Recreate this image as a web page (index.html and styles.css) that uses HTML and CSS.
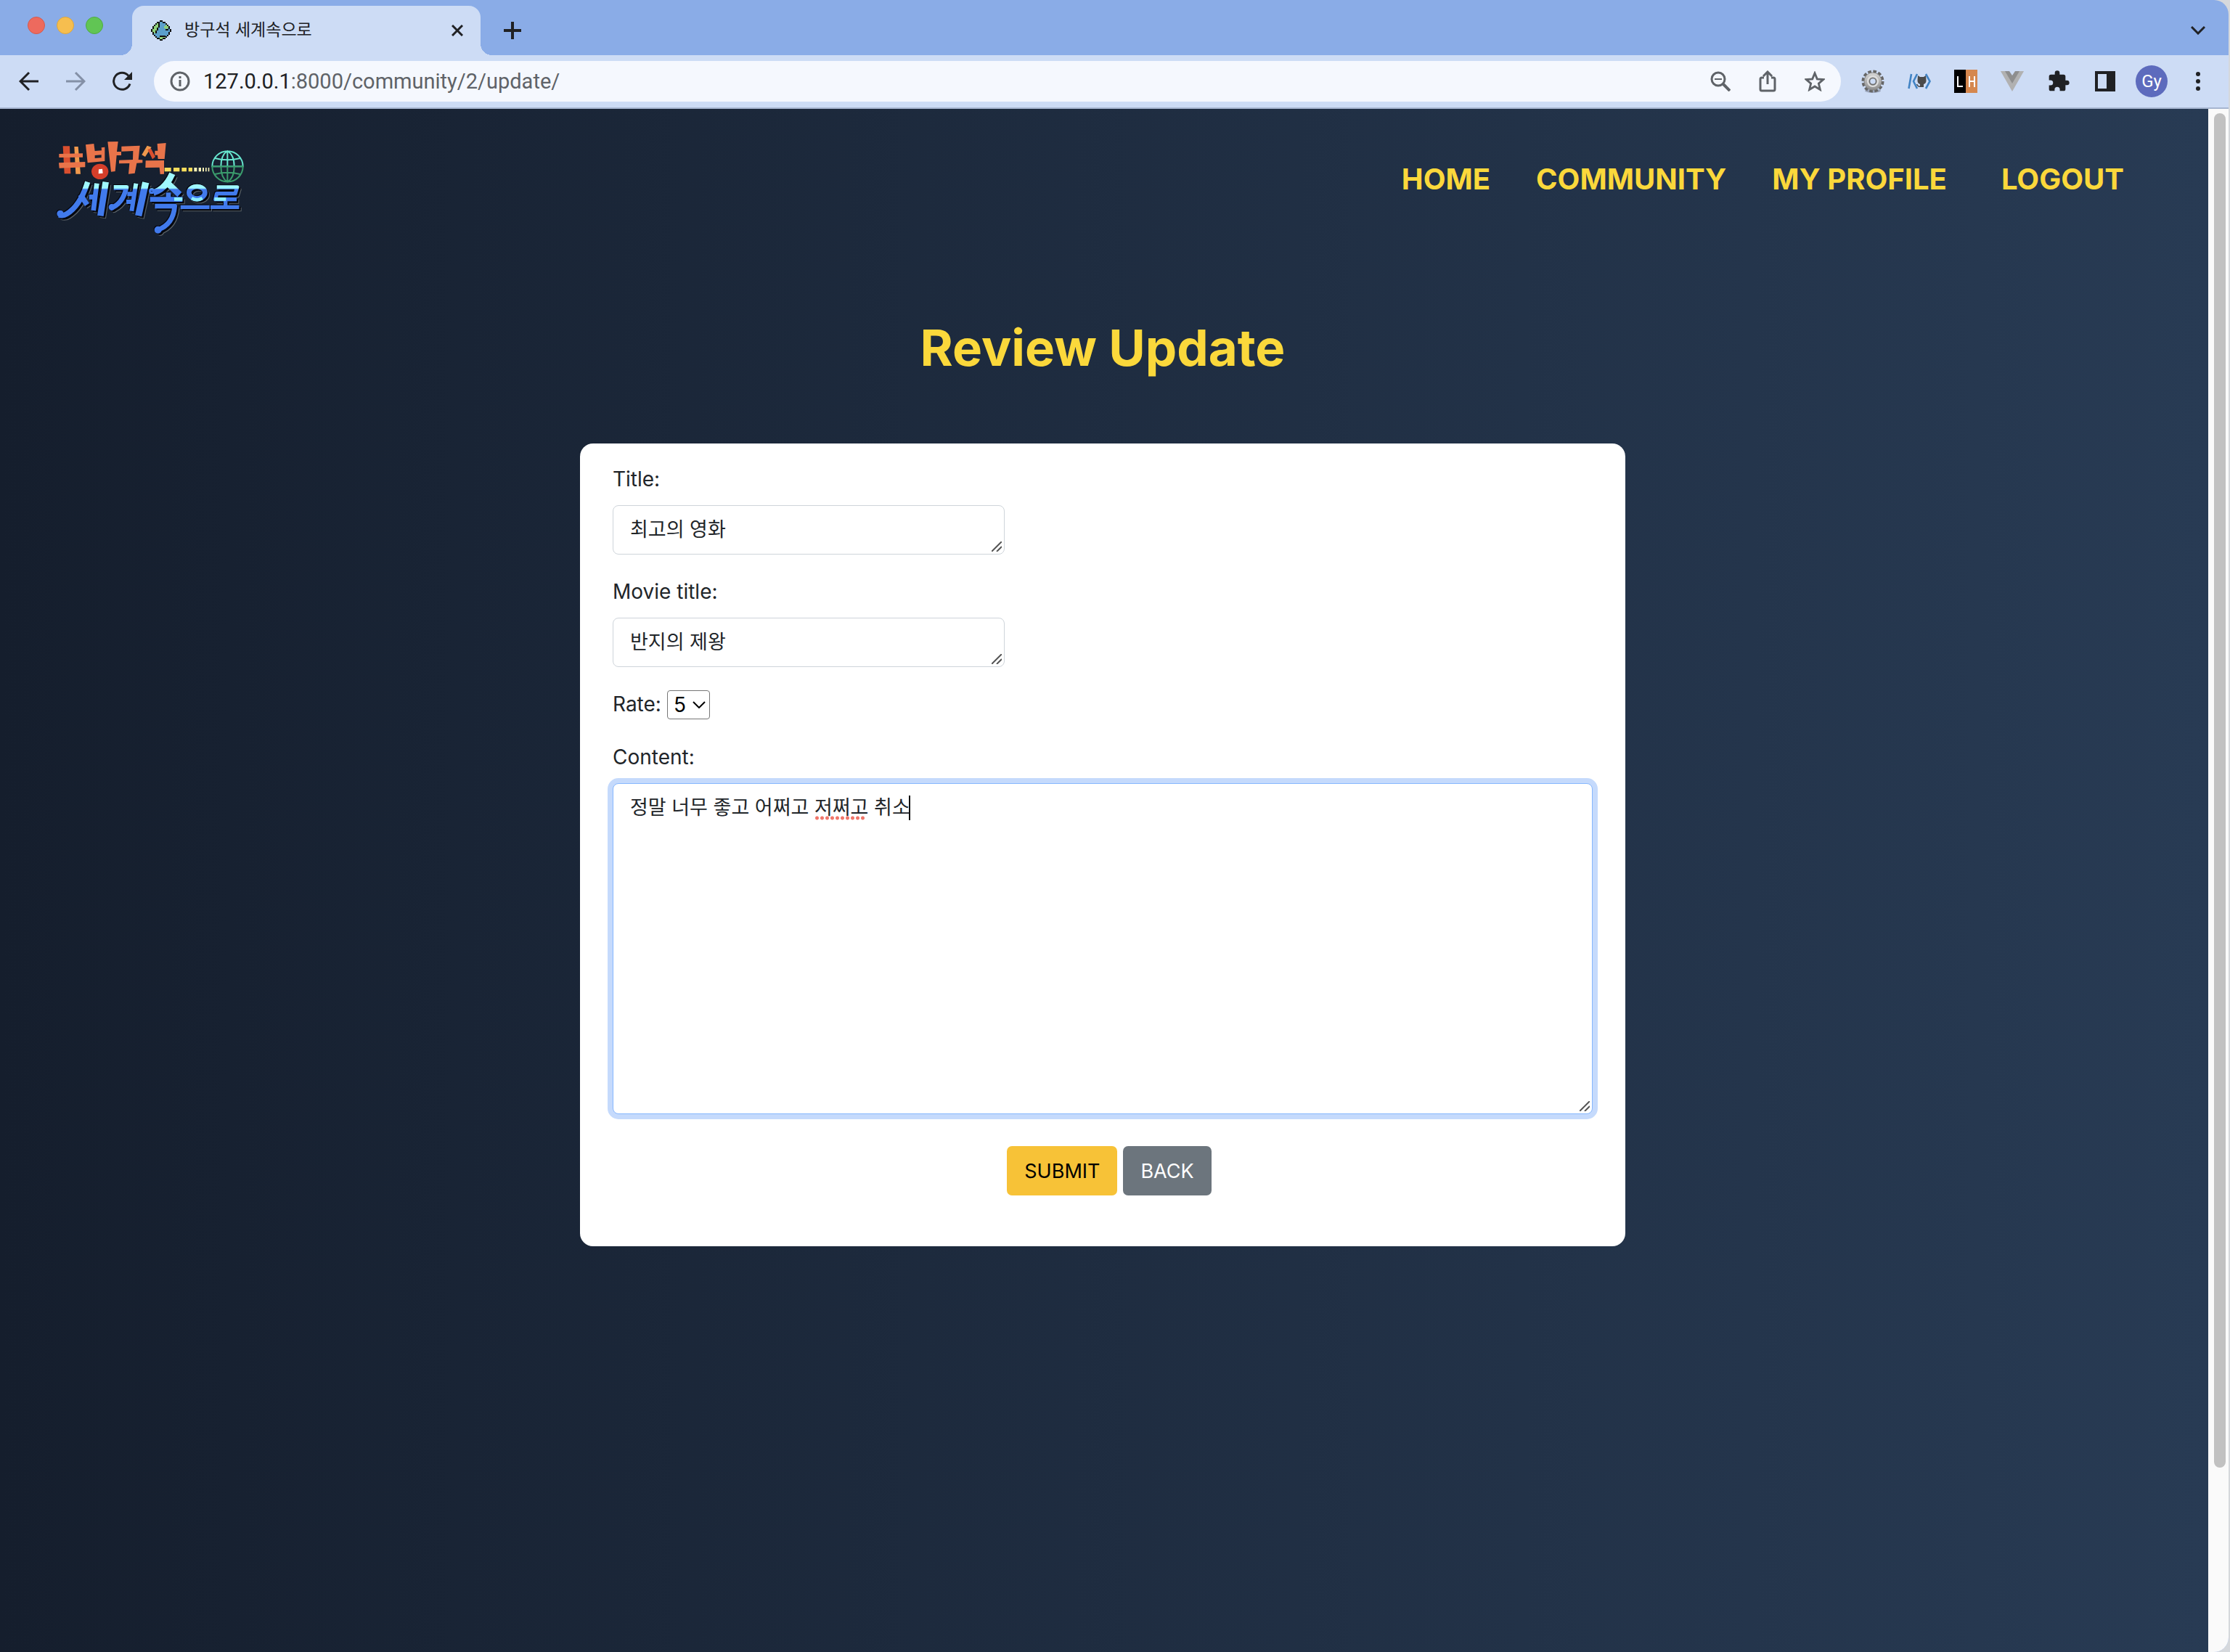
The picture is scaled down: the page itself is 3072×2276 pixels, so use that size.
FILE: index.html
```html
<!DOCTYPE html>
<html lang="ko">
<head>
<meta charset="utf-8">
<title>방구석 세계속으로</title>
<link rel="stylesheet" href="styles.css">
</head>
<body>
<div class="browser">
  <header class="tabstrip">
    <div class="lights"><span class="light red"></span><span class="light amber"></span><span class="light green"></span></div>
    <div class="tab">
      <svg class="favicon" viewBox="0 0 28 28" aria-hidden="true" shape-rendering="crispEdges"><path fill="#111" d="M12 0h4v2h4v2h2v2h2v2h2v4h2v4h-2v4h-2v2h-2v2h-2v2h-4v2h-4v-2h-4v-2h-2v-2h-2v-2h-2v-4h-2v-4h2v-4h2v-2h2v-2h2v-2h4z"/><path fill="#5b9fcb" d="M12 2h4v2h4v2h2v2h2v4h2v4h-2v4h-2v2h-2v2h-4v2h-4v-2H8v-2H6v-2H4v-4H2v-4h2V8h2V6h2V4h4z"/><path fill="#8fd07a" d="M8 4h2v6H8v4H6v4H4v-2H2v-4h2V8h2V6h2zM18 8h2V6h2v2h2v3h-2v2h-2v-2h-2zM12 23h8v1h-4v2h-4z"/><path fill="#111" d="M10 4h2v6h-2zM8 10h2v4H8zM6 14h2v4H6zM20 12h4v2h-4zM12 21h8v2h-8z"/></svg>
      <span class="tab-title">방구석 세계속으로</span>
      <button class="icon-button tab-close" aria-label="Close tab"><svg width="16" height="16" viewBox="0 0 16 16"><path d="M1 1l14 14M15 1L1 15" stroke="#202124" stroke-width="3" fill="none"/></svg></button>
    </div>
    <button class="icon-button new-tab" aria-label="New tab"><svg width="24" height="24" viewBox="0 0 24 24"><path d="M12 0v24M0 12h24" stroke="#202124" stroke-width="4"/></svg></button>
    <button class="icon-button tab-search" aria-label="Search tabs"><svg width="20" height="12" viewBox="0 0 20 12"><path d="M1 1l9 9 9-9" stroke="#202124" stroke-width="3" fill="none"/></svg></button>
  </header>
  <div class="toolbar">
    <div class="history">
      <button class="icon-button" aria-label="Back"><svg width="28" height="28" viewBox="0 0 28 28"><path d="M27 14H3M14 2L2 14l12 12" stroke="#202124" stroke-width="3" fill="none"/></svg></button>
      <button class="icon-button" aria-label="Forward"><svg width="28" height="28" viewBox="0 0 28 28"><path d="M1 14h24M14 2l12 12-12 12" stroke="#8490a6" stroke-width="3" fill="none"/></svg></button>
      <button class="icon-button" aria-label="Reload"><svg width="28" height="28" viewBox="0 0 28 28"><path d="M25 17.500A11.500 11.500 0 1 1 23 6.500" stroke="#202124" stroke-width="3" fill="none"/><path d="M28 1v11H17z" fill="#202124"/></svg></button>
    </div>
    <div class="omnibox">
      <svg width="28" height="28" viewBox="0 0 28 28" aria-hidden="true"><circle cx="14" cy="14" r="12" stroke="#5f6368" stroke-width="3" fill="none"/><path d="M14 12v9M14 7v3" stroke="#5f6368" stroke-width="3"/></svg>
      <p class="url">127.0.0.1<span class="url-path">:8000/community/2/update/</span></p>
      <div class="omni-actions">
        <button class="icon-button" aria-label="Zoom"><svg width="28" height="28" viewBox="0 0 28 28"><circle cx="11" cy="11" r="9" stroke="#5f6368" stroke-width="3" fill="none"/><path d="M18 18l9 9" stroke="#5f6368" stroke-width="4"/><path d="M6 11h10" stroke="#5f6368" stroke-width="2"/></svg></button>
        <button class="icon-button" aria-label="Share"><svg width="28" height="30" viewBox="0 0 28 30"><path d="M9 10H6q-2 0-2 2v14q0 2 2 2h16q2 0 2-2V12q0-2-2-2h-3M14 19V3M8 8l6-6 6 6" stroke="#5f6368" stroke-width="3" fill="none"/></svg></button>
        <button class="icon-button" aria-label="Bookmark"><svg width="28" height="28" viewBox="0 0 30 30"><path d="M15 3l3.500 8.600 9.200.7-7 6 2.200 9L15 22.500l-7.900 4.800 2.200-9-7-6 9.200-.7z" stroke="#5f6368" stroke-width="3" fill="none"/></svg></button>
      </div>
    </div>
    <div class="extensions">
      <svg width="32" height="32" viewBox="0 0 32 32" aria-hidden="true"><defs><linearGradient id="metal" x1="0" y1="0" x2="0" y2="1"><stop offset="0" stop-color="#d6d6d6"/><stop offset="1" stop-color="#8f8f8f"/></linearGradient></defs><ellipse cx="16" cy="29" rx="11" ry="3" fill="#9aa5ba"/><circle cx="16" cy="16" r="13" fill="none" stroke="#666" stroke-width="5" stroke-dasharray="4.400 2.400"/><circle cx="16" cy="16" r="12" fill="url(#metal)" stroke="#858585"/><circle cx="16" cy="16" r="7" fill="none" stroke="#dedede" stroke-width="2"/><circle cx="16" cy="16" r="4.500" fill="#cddcf5" stroke="#6b6b6b" stroke-width="1.500"/></svg>
      <svg width="32" height="32" viewBox="0 0 32 32" aria-hidden="true"><path d="M5 6L1.500 26M13 6L8 16l5 10M25 6l5.500 10L25 26" stroke="#4183c4" stroke-width="2.600" fill="none"/><path d="M14 8l3 2h5l3-2 .5 7q0 4-3.500 5v4h-5v-4q-3.500-1-3.500-5z" fill="#4a4a4a"/><path d="M12.500 20q2 4 5 3" stroke="#4a4a4a" stroke-width="1.500" fill="none"/></svg>
      <svg width="32" height="32" viewBox="0 0 32 32" aria-hidden="true"><path fill="#000" d="M0 0h16v32H0z"/><path fill="#d5874e" d="M16 0h16v32H16z"/><path d="M5 9v14h7M21 9v15M28 9v15M21 16h7" stroke="#fff" stroke-width="2" fill="none"/></svg>
      <svg width="32" height="28" viewBox="0 0 32 28" aria-hidden="true"><path fill="#b1b1b1" d="M0 0h32L16 28z"/><path fill="#8e8e8e" d="M6 0h20L16 17z"/><path fill="#cddcf5" d="M12 0h8l-4 6z"/></svg>
      <svg width="32" height="32" viewBox="0 0 24 24" aria-hidden="true"><path fill="#202124" d="M20.500 11H19V7a2 2 0 0 0-2-2h-4V3.500a2.500 2.500 0 0 0-5 0V5H4a2 2 0 0 0-2 2v3.800h1.500a2.700 2.700 0 0 1 0 5.400H2V20a2 2 0 0 0 2 2h3.800v-1.500a2.700 2.700 0 0 1 5.400 0V22H17a2 2 0 0 0 2-2v-4h1.500a2.500 2.500 0 0 0 0-5z"/></svg>
      <svg width="32" height="28" viewBox="0 0 32 28" aria-hidden="true"><path fill="#202124" fill-rule="evenodd" d="M2 0h28v28H2zM6 4v20h12V4z"/></svg>
      <span class="avatar">Gy</span>
      <button class="icon-button menu" aria-label="Menu"><svg width="8" height="28" viewBox="0 0 8 28"><g fill="#202124"><circle cx="4" cy="4" r="3"/><circle cx="4" cy="14" r="3"/><circle cx="4" cy="24" r="3"/></g></svg></button>
    </div>
  </div>
  <div class="viewport">
    <div class="page">
      <nav class="navbar">
        <a class="brand" href="#" aria-label="방구석 세계속으로">
          <svg class="logo" viewBox="0 0 900 510" aria-hidden="true">
            <g fill="#e8744a">
              <path fill="#d94f2f" d="M80 94h28l4 114H86z"/><path fill="#f0994d" d="M127 96h16l10 113h-20z"/>
              <path d="M64 126l98-2v16l-98 1zM63 163l109-4v22l-107 4z"/>
              <path fill-rule="evenodd" d="M174 88l34-4 4 30 28-2-1-12 14-2v58l-71 7zM212 132v12l27-2v-12z"/>
              <path d="M265 76l43-1-5 42h18v15h-19l-6 66-17 2z"/>
              <path d="M322 95l76-3-6 58 17 1v12l-24 1-8 42-26 3 4-44-43 1v-14l57-2 1-36-48 2z"/>
              <path fill="#f0994d" d="M428 92l18 6-26 40-14-8z"/><path fill="#d94f2f" d="M430 108l14-4 18 34-12 10z"/>
              <path d="M470 84l36-3-6 66h-27l-2-16h-11v-18h12zM422 154l76-1v56l-16 1-3-28-58 1z"/>
            </g>
            <ellipse cx="233" cy="199" rx="35" ry="32" fill="#d63e2a"/><path fill="#fff" d="M228 190l15-2 2 18-18 2z"/>
            <path stroke="#f8dc5c" stroke-width="16" d="M500 191h27M537 191h25M571 191h20M599 191h16" fill="none"/><path stroke="#f7f1b5" stroke-width="16" d="M622 191h12M641 191h10M657 191h6M669 191h5M680 191h5" fill="none"/>
            <g fill="none" stroke-width="6"><g stroke="#68e7d0"><path d="M697 178a63 63 0 0 1 127 0zM760 114v64M733 178q0-48 27-64 28 16 28 64M708 144q52 14 104 0"/></g><g stroke="#3a9b6c"><path d="M697 178a63 63 0 0 0 127 0zM760 242v-64M733 178q0 48 27 64 28-16 28-64M708 210q52-14 104 0"/></g></g>
            <defs>
              <linearGradient id="wave" gradientUnits="userSpaceOnUse" x1="0" y1="200" x2="0" y2="460"><stop offset="0" stop-color="#9ff8ff"/><stop offset=".26" stop-color="#9ff8ff"/><stop offset=".28" stop-color="#417aec"/><stop offset="1" stop-color="#417aec"/></linearGradient>
              <g id="lower" fill="none" stroke-linejoin="round">
                <path d="M182 242q-30 98-86 132-16 10-32 4" stroke-width="22"/><circle cx="69" cy="373" r="7" stroke-width="14"/>
                <path d="M152 294l28 42" stroke-width="22"/><path d="M220 248l-14 112M188 304h22" stroke-width="20"/><path d="M257 242l-22 140" stroke-width="26"/>
                <path d="M290 265h52q-14 68-66 86" stroke-width="20"/><circle cx="282" cy="346" r="6" stroke-width="14"/>
                <path d="M382 248l-18 114M346 292h30M342 324h28" stroke-width="18"/><path d="M422 244l-30 138" stroke-width="28"/>
                <path d="M532 208q-28 64-78 78M516 250l46 44" stroke-width="26"/><circle cx="447" cy="280" r="5" stroke-width="14"/>
                <path d="M516 286v28M440 314h134M460 342h82q-6 76-70 98" stroke-width="20"/><circle cx="473" cy="440" r="7" stroke-width="16"/>
                <ellipse cx="634" cy="286" rx="33" ry="25" stroke-width="20"/><path d="M566 346h120" stroke-width="16"/>
                <path d="M716 264h84l-8 26h-76l-6 24h88M752 314v30M690 346h118" stroke-width="16"/>
              </g>
            </defs>
            <use href="#lower" stroke="#596166" transform="translate(10 10)"/><use href="#lower" stroke="#05070f" transform="translate(7 7)"/><use href="#lower" stroke="#05070f" transform="translate(-3 -3)"/><use href="#lower" stroke="url(#wave)"/>
            <path d="M540 313h34M706 313h48M612 309q22 14 44 0" stroke="#8deeff" stroke-width="14" fill="none"/>
          </svg>
        </a>
        <div class="nav-links">
          <a href="#">HOME</a><a href="#">COMMUNITY</a><a href="#">MY PROFILE</a><a class="logout" href="#">LOGOUT</a>
        </div>
      </nav>
      <main>
        <h1>Review Update</h1>
        <form class="card">
          <div class="field"><label for="title">Title:</label>
            <div class="control short"><textarea id="title" spellcheck="false">최고의 영화</textarea><svg class="grip" viewBox="0 0 14 14" aria-hidden="true"><path d="M0 14L14 0M7 14l7-7"/></svg></div></div>
          <div class="field"><label for="movie">Movie title:</label>
            <div class="control short"><textarea id="movie" spellcheck="false">반지의 제왕</textarea><svg class="grip" viewBox="0 0 14 14" aria-hidden="true"><path d="M0 14L14 0M7 14l7-7"/></svg></div></div>
          <div class="field inline"><label for="rate">Rate:</label>
            <div class="select"><select id="rate"><option>5</option></select><svg class="chevron" viewBox="0 0 18 10" aria-hidden="true"><path d="M1 1l8 8 8-8"/></svg></div></div>
          <div class="field"><label for="content">Content:</label>
            <div class="control tall"><textarea id="content" spellcheck="false">정말 너무 좋고 어쩌고 저쩌고 취소</textarea><span class="misspelling"></span><span class="caret"></span><svg class="grip" viewBox="0 0 14 14" aria-hidden="true"><path d="M0 14L14 0M7 14l7-7"/></svg></div></div>
          <div class="actions"><button class="btn submit" type="submit">SUBMIT</button><button class="btn back" type="button">BACK</button></div>
        </form>
      </main>
    </div>
    <div class="scrollbar"><div class="thumb"></div></div>
  </div>
</div>
</body>
</html>
```
FILE: styles.css
```css
* { box-sizing: border-box; }
body { margin: 0; background: #d5d8dc; font-family: Inter, "Noto Sans CJK KR", sans-serif; color: #212529; }
svg { display: block; flex: none; }
button, select, textarea { font-family: inherit; }
.icon-button { display: flex; padding: 0; border: 0; background: none; }
.browser { display: flex; flex-direction: column; min-height: 100vh; margin-right: 2px; border-radius: 0 20px 20px 0; overflow: hidden; background: #8aace7; }

/* Tab strip */
.tabstrip { display: flex; align-items: center; height: 76px; padding: 8px 32px 0 38px; }
.lights { display: flex; align-self: flex-start; gap: 16px; width: 144px; padding-top: 15px; }
.light { width: 24px; height: 24px; border-radius: 50%; }
.red { background: #ed6a5e; border: 1px solid #d45a4e; }
.amber { background: #f6be4f; border: 1px solid #dba640; }
.green { background: #61c554; border: 1px solid #4fab43; }
.tab { position: relative; display: flex; align-items: center; gap: 18px; width: 480px; height: 68px; padding: 0 24px 0 26px; border-radius: 16px 16px 0 0; background: #cddcf5; }
.tab::before, .tab::after { content: ""; position: absolute; bottom: 0; width: 16px; height: 16px; }
.tab::before { right: 100%; background: radial-gradient(circle at 0 0, transparent 16px, #cddcf5 16px); }
.tab::after { left: 100%; background: radial-gradient(circle at 100% 0, transparent 16px, #cddcf5 16px); }
.favicon { width: 28px; height: 28px; }
.tab-title { font-size: 23px; line-height: 32px; padding-bottom: 2px; color: #202124; }
.tab-close { margin-left: auto; }
.new-tab { margin-left: 32px; }
.tab-search { margin-left: auto; }

/* Toolbar */
.toolbar { display: flex; align-items: center; height: 74px; padding: 0 38px 0 26px; border-bottom: 2px solid #a6b5d0; background: #cddcf5; }
.history { display: flex; gap: 36px; margin-right: 30px; }
.omnibox { flex: 1; display: flex; align-items: center; gap: 18px; height: 56px; padding: 0 22px; border-radius: 28px; background: #f5f8fe; }
.url { margin: 0; font-family: Roboto, sans-serif; font-size: 29px; color: #202124; }
.url-path { color: #5f6368; }
.omni-actions { display: flex; align-items: center; gap: 37px; margin-left: auto; }
.extensions { display: flex; align-items: center; gap: 32px; margin-left: 28px; }
.avatar { width: 44px; height: 44px; margin-left: -6px; border-radius: 50%; background: #5d6bbd; color: #fff; font-family: Roboto, sans-serif; font-size: 24px; line-height: 44px; text-align: center; }
.menu { margin-left: 6px; }

/* Page */
.viewport { flex: 1; display: flex; }
.page { flex: 1; background: linear-gradient(to right, #151e2d, #283b54); }
.scrollbar { width: 28px; padding: 6px 4px 0 8px; background: #fafafa; }
.thumb { height: 88%; border-radius: 8px; background: #c1c1c1; }
.navbar { display: flex; align-items: center; justify-content: space-between; padding: 20px 116px 0 60px; }
.logo { width: 300px; height: 170px; }
.nav-links { display: flex; gap: 63px; padding-bottom: 17px; }
.nav-links a { color: #fbd83b; font-size: 40px; font-weight: 700; line-height: 64px; text-decoration: none; }
.nav-links .logout { margin-left: 12px; }
main { padding-right: 4px; }
h1 { margin: 94px 0 87px; color: #fbd83b; font-size: 69px; line-height: 90px; font-weight: 700; text-align: center; }
.card { max-width: 1440px; margin: 0 auto; padding: 28px 45px 70px; border-radius: 18px; background: #fff; font-size: 28px; line-height: 43px; }
.field { display: flex; flex-direction: column; gap: 14px; margin-bottom: 30px; }
.inline { flex-direction: row; gap: 8px; }
.control { position: relative; }
.short { width: 40%; }
textarea { display: block; width: 100%; height: 68px; padding: 11px 23px; border: 1px solid #ced4da; border-radius: 8px; background: #fff; color: #212529; font-size: 27px; line-height: 43px; resize: none; overflow: hidden; outline: 0; }
.tall textarea { height: 456px; border-color: #86b7fe; box-shadow: 0 0 0 7px #c5dafc; }
.grip { position: absolute; right: 4px; bottom: 4px; width: 14px; height: 14px; fill: none; stroke: #555; stroke-width: 2; }
.misspelling { position: absolute; left: 278px; top: 45px; width: 71px; height: 6px; background: radial-gradient(circle, #f0776b 2px, transparent 3px) 0 0 / 7px 6px; }
.caret { position: absolute; left: 408px; top: 17px; width: 2px; height: 34px; background: #111; }
.select { position: relative; align-self: center; }
select { display: block; appearance: none; width: 59px; height: 40px; padding: 0 8px; border: 1px solid #767676; border-radius: 4px; background: #fff; color: #000; font-size: 28px; line-height: 38px; }
.chevron { position: absolute; right: 6px; top: 15px; width: 18px; height: 10px; fill: none; stroke: #000; stroke-width: 2; }
.actions { display: flex; justify-content: center; gap: 8px; padding: 14px 0 0 18px; }
.btn { height: 68px; padding: 0 24px; border: 0; border-radius: 7px; font-size: 27px; }
.submit { background: #f7c237; color: #000; }
.back { background: #6c757d; color: #fff; }
```
